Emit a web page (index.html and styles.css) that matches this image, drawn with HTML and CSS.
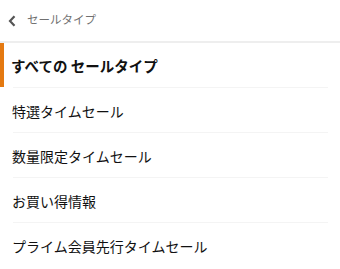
FILE: index.html
```html
<!DOCTYPE html>
<html lang="ja">
<head>
<meta charset="utf-8">
<link rel="stylesheet" href="styles.css">
</head>
<body>
<div class="header">
  <svg class="chev" width="8" height="12" viewBox="0 0 8 12"><path d="M6.5 1.2 L2 6 L6.5 10.8" fill="none" stroke="#555" stroke-width="2.2"/></svg>
  <span class="htitle">セールタイプ</span>
</div>
<ul class="list">
  <li class="item active"><span>すべての セールタイプ</span></li>
  <li class="item"><span>特選タイムセール</span></li>
  <li class="item"><span>数量限定タイムセール</span></li>
  <li class="item"><span>お買い得情報</span></li>
  <li class="item last"><span>プライム会員先行タイムセール</span></li>
</ul>
</body>
</html>
```
FILE: styles.css
```css
html, body {
  margin: 0;
  padding: 0;
  background: #fff;
  font-family: "Noto Sans CJK JP", "Noto Sans", sans-serif;
}
.header {
  height: 41px;
  display: flex;
  align-items: center;
  padding-left: 8px;
  border-bottom: 2px solid #eeeeee;
  box-sizing: content-box;
}
.chev {
  margin-right: 11px;
  margin-top: 1px;
}
.htitle {
  font-size: 11.5px;
  color: #707070;
  margin-top: -4px;
}
.list {
  list-style: none;
  margin: 0;
  padding: 0;
}
.item {
  height: 45px;
  display: flex;
  align-items: center;
  padding-left: 12px;
  position: relative;
  font-size: 14px;
  color: #111;
}
.item::after {
  content: "";
  position: absolute;
  left: 13px;
  right: 12px;
  bottom: 0;
  height: 1px;
  background: #f4f4f4;
}
.item.last::after { display: none; }
.item.active {
  font-weight: bold;
  font-size: 14.5px;
  padding-left: 11px;
}
.item.active::before {
  content: "";
  position: absolute;
  left: 0;
  top: 0;
  bottom: 1px;
  width: 4px;
  background: #e47911;
}
```
